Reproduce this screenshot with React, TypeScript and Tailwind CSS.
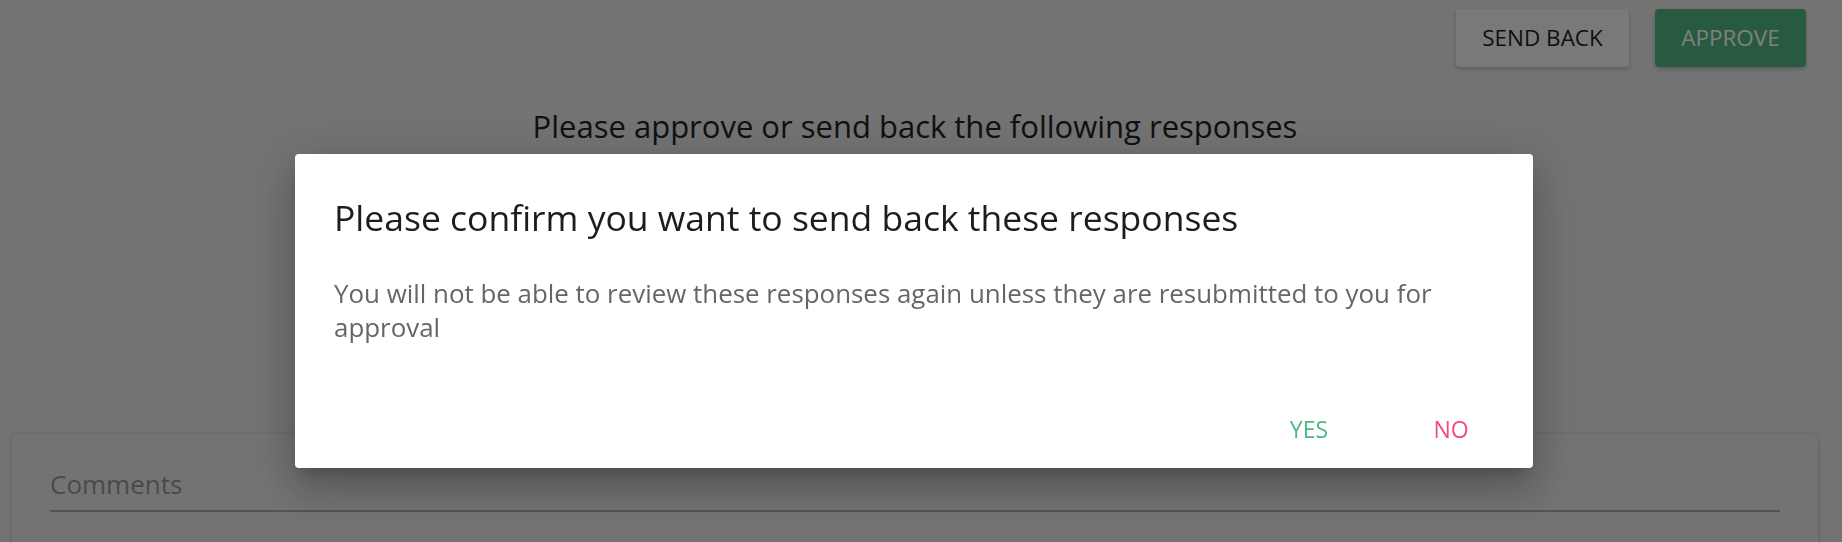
import React from 'react'

const ConfirmDialog = () => {
  return (
    <div className="fixed inset-0 z-10 bg-black/50">
      <div className="flex w-[1828px] justify-center pt-[154px]">
        <div
          role="dialog"
          className="w-[1238px] rounded-[4px] bg-white shadow-[0_11px_15px_-7px_rgba(0,0,0,0.2),0_24px_38px_3px_rgba(0,0,0,0.14),0_9px_46px_8px_rgba(0,0,0,0.12)]"
        >
          <h2 className="px-[39px] pt-[41px] text-[35.5px] leading-[44px] font-normal text-[#1d1d1d]">
            Please confirm you want to send back these responses
          </h2>
          <p className="mt-[37px] px-[39px] text-[25.9px] leading-[34px] text-[#666666]">
            You will not be able to review these responses again unless they are resubmitted to you for
            approval
          </p>
          <div className="mt-[69px] flex justify-end gap-[40px] pr-[31px] pb-[23px]">
            <button className="w-[102px] text-[23px] leading-[32px] text-[#4cb986]">YES</button>
            <button className="w-[102px] text-[23px] leading-[32px] text-[#f04c7e]">NO</button>
          </div>
        </div>
      </div>
    </div>
  )
}

export default function App() {
  return (
    <div
      className="relative h-[542px] overflow-hidden bg-[#e6e6e6]"
      style={{ fontFamily: '"Open Sans", "Noto Sans", sans-serif' }}
    >
      <div className="w-[1830px]">
        <div className="flex justify-end gap-[26px] pt-[9px] pr-[24px]">
          <button className="h-[58px] w-[173px] rounded-[4px] bg-[#f3f3f3] text-[22.5px] text-[#1e1e1e] shadow-[0_2px_4px_rgba(0,0,0,0.2)]">
            SEND BACK
          </button>
          <button className="h-[58px] w-[151px] rounded-[4px] bg-[#50b480] text-[22.5px] text-white shadow-[0_2px_4px_rgba(0,0,0,0.2)]">
            APPROVE
          </button>
        </div>
        <h1 className="mt-[39px] text-center text-[31px] leading-[40px] text-[#222222]">
          Please approve or send back the following responses
        </h1>
        <div className="mx-[12px] mt-[288px] h-[200px] rounded-[6px] bg-[#e6e6e6] px-[38px] pt-[32px] shadow-[0_1px_5px_rgba(0,0,0,0.2)]">
          <div className="border-b-2 border-[#a8a8a8] pb-[8px] text-[26px] leading-[36px] text-[#959595]">
            Comments
          </div>
        </div>
      </div>
      <ConfirmDialog />
    </div>
  )
}
